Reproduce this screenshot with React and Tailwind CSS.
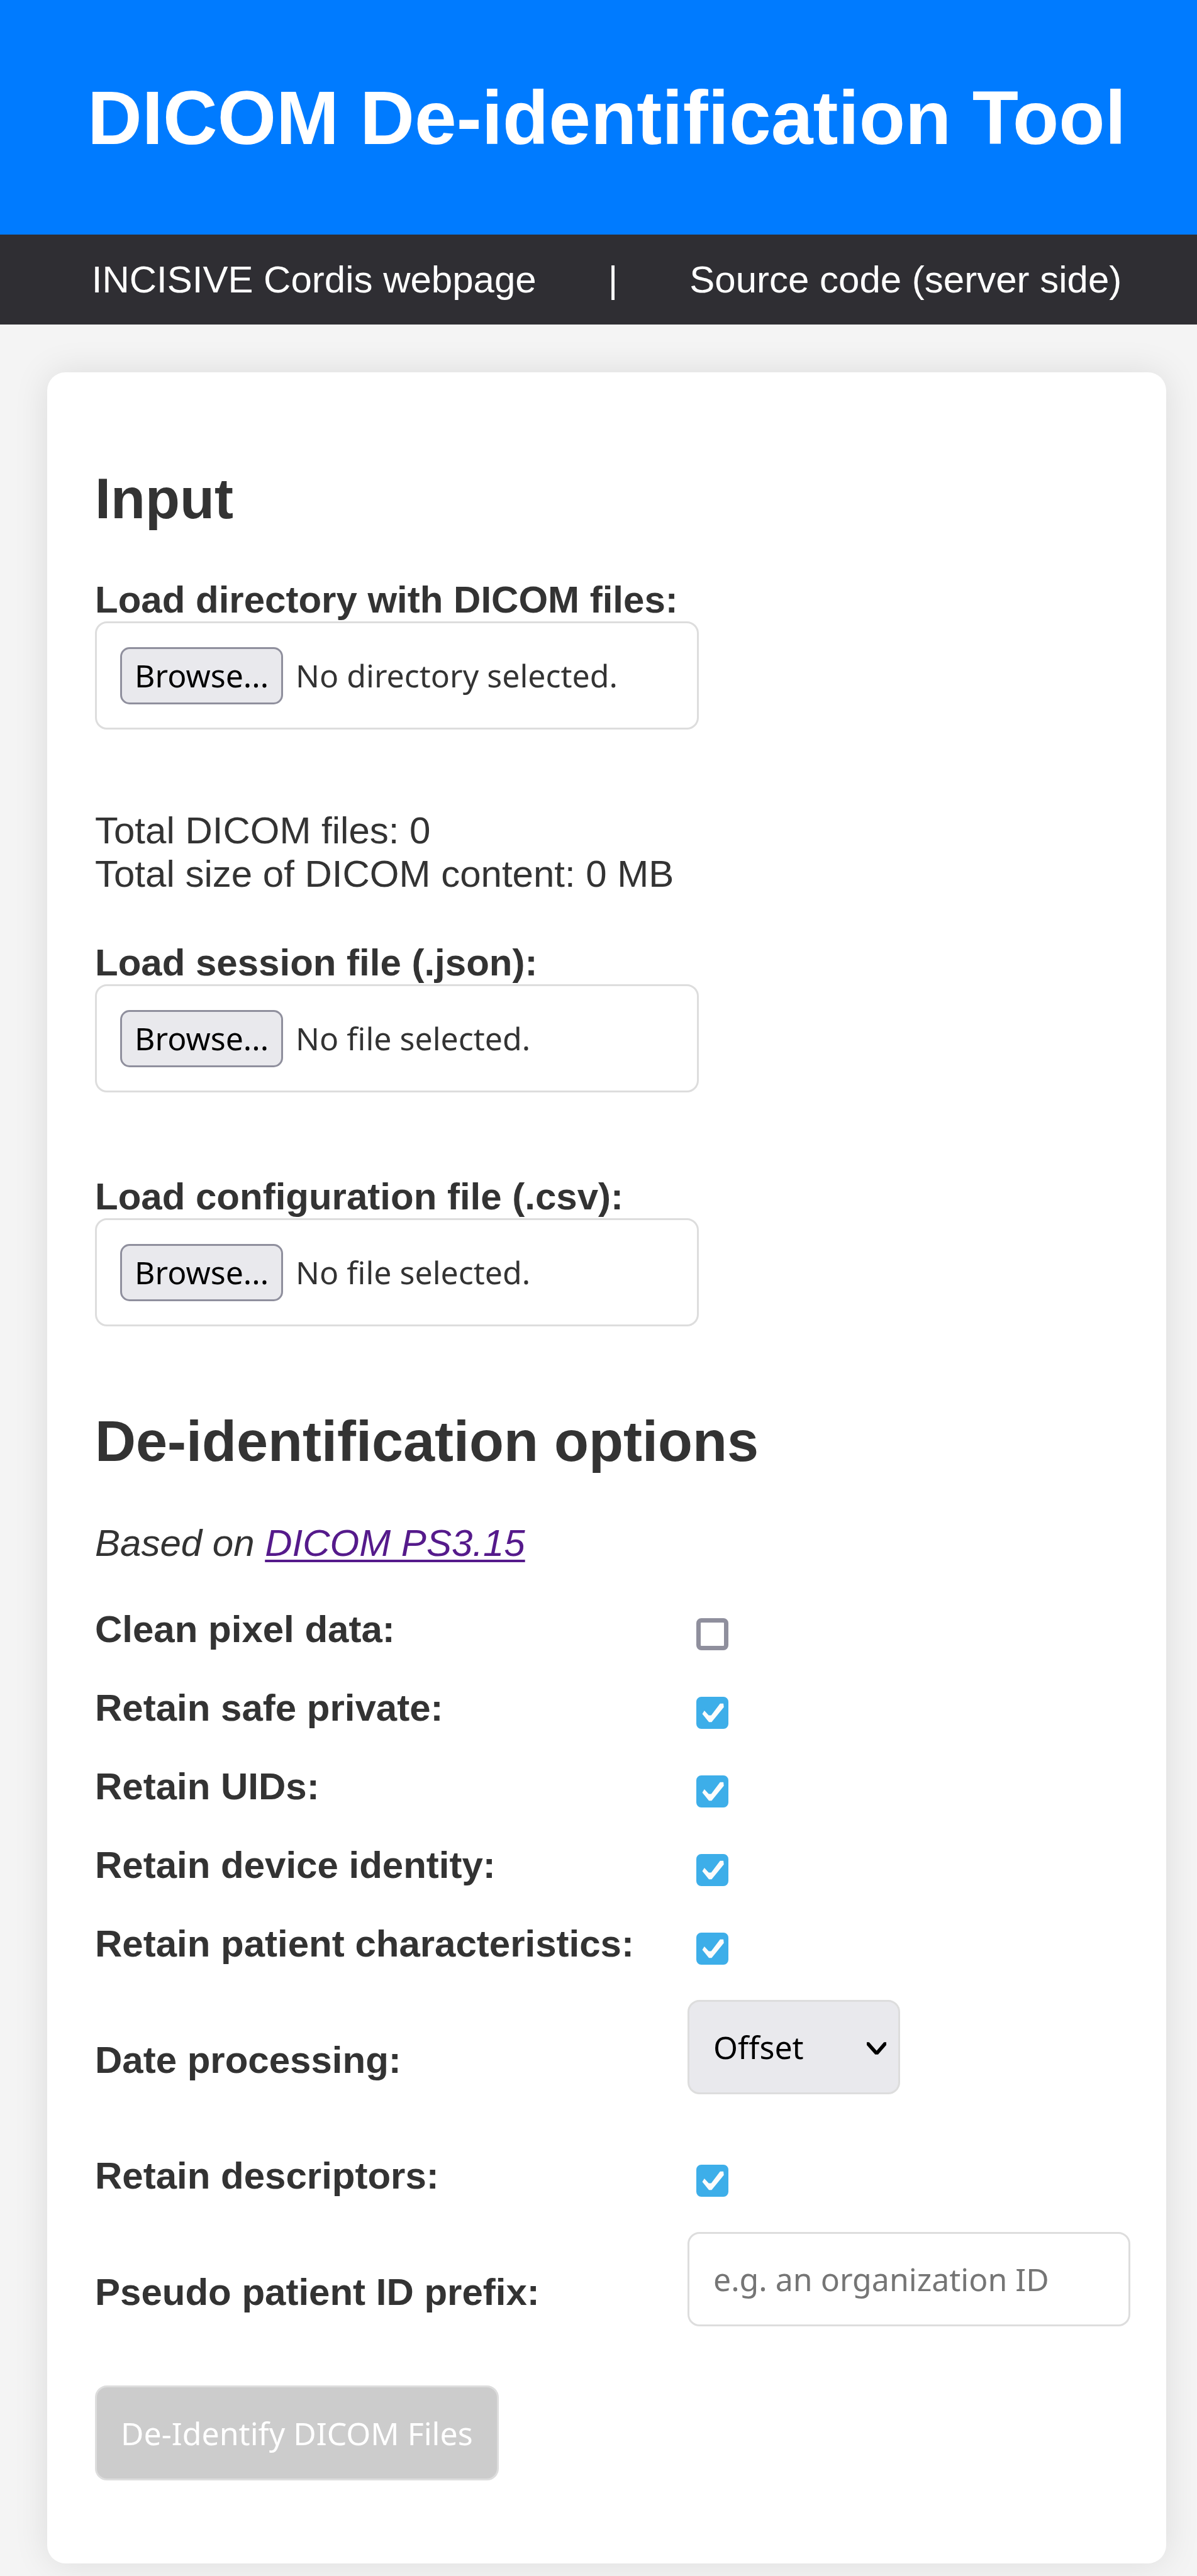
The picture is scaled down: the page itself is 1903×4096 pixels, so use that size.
import React from "react";

function FileField({ id, label, status }) {
  return (
    <div className="flex flex-col items-start">
      <label htmlFor={id} className="font-bold leading-[68px]">
        {label}
      </label>
      <label
        htmlFor={id}
        className="flex min-h-[172px] w-[960px] max-w-full items-center gap-[20px] rounded-[19px] border-[3px] border-[#ddd] px-[37px] font-['Noto_Sans',sans-serif] text-[50px] leading-[68px]"
      >
        <input id={id} type="file" className="sr-only" />
        <span className="flex h-[91px] items-center rounded-[15px] border-[3px] border-[#8f8f9d] bg-[#e9e9ed] px-[20px] text-black">
          Browse...
        </span>
        <span>{status}</span>
      </label>
    </div>
  );
}

function CheckRow({ id, label, checked }) {
  return (
    <div className="grid h-[125px] grid-cols-[942px_1fr] items-center">
      <label htmlFor={id} className="font-bold">
        {label}
      </label>
      <span className="relative ml-[14px] mt-[16px] block size-[51px]">
        <input
          id={id}
          type="checkbox"
          defaultChecked={checked}
          className="peer block size-full appearance-none rounded-[8px] border-[7px] border-[#8f8f9d] bg-white checked:border-[#3daee9] checked:bg-[#3daee9]"
        />
        <svg
          viewBox="0 0 155 155"
          aria-hidden="true"
          className="pointer-events-none absolute inset-0 hidden size-full peer-checked:block"
        >
          <path d="M29 83L39 67L60 90H72L115 33H131L133 50L74 122H61Z" fill="#fcfcfc" />
        </svg>
      </span>
    </div>
  );
}

export default function App() {
  return (
    <div className="min-h-screen bg-[#f4f4f4] pb-[20px] font-['Liberation_Sans',Arial,sans-serif] text-[60px] leading-[69px] text-[#333]">
      <header className="bg-[#007bff] pb-[117px] pl-[26px] pt-[118px] text-center text-white">
        <h1 className="whitespace-nowrap text-[120px] font-bold leading-[138px]">
          DICOM De-identification Tool
        </h1>
      </header>
      <nav className="flex justify-center gap-[114px] whitespace-nowrap bg-[#2f2e33] py-[37px] pl-[26px] text-white">
        <a href="#webpage">INCISIVE Cordis webpage</a>
        <span>|</span>
        <a href="#source">Source code (server side)</a>
      </nav>

      <main className="ml-[75px] mr-[49px] mt-[76px] rounded-[29px] bg-white pb-[132px] pl-[76px] pr-[57px] pt-[150px] shadow-[0_0_56px_rgba(0,0,0,0.1)]">
        <h2 className="mb-[75px] text-[90px] font-bold leading-[103px]">Input</h2>
        <FileField
          id="directory"
          label="Load directory with DICOM files:"
          status="No directory selected."
        />
        <div className="mb-[73px] mt-[126px]">
          <p>Total DICOM files: 0</p>
          <p>Total size of DICOM content: 0 MB</p>
        </div>
        <FileField id="session" label="Load session file (.json):" status="No file selected." />
        <div className="mt-[132px]">
          <FileField
            id="configuration"
            label="Load configuration file (.csv):"
            status="No file selected."
          />
        </div>

        <h2 className="mb-[75px] mt-[132px] text-[90px] font-bold leading-[103px]">
          De-identification options
        </h2>
        <p className="mb-[40px] italic">
          Based on{" "}
          <a
            href="#ps315"
            className="text-[#551a8b] underline decoration-[4px] underline-offset-[6px]"
          >
            DICOM PS3.15
          </a>
        </p>

        <CheckRow id="pixel" label="Clean pixel data:" />
        <CheckRow id="private" label="Retain safe private:" checked />
        <CheckRow id="uids" label="Retain UIDs:" checked />
        <CheckRow id="device" label="Retain device identity:" checked />
        <CheckRow id="patient" label="Retain patient characteristics:" checked />
        <div className="grid h-[244px] grid-cols-[942px_1fr] items-center">
          <label htmlFor="date" className="font-bold">
            Date processing:
          </label>
          <span className="relative mb-[40px] block w-[338px]">
            <select
              id="date"
              className="block h-[150px] w-full appearance-none rounded-[19px] border-[3px] border-[#ddd] bg-[#e9e9ed] px-[38px] font-['Noto_Sans',sans-serif] text-[50px] text-black"
            >
              <option>Offset</option>
              <option>Remove</option>
              <option>Retain</option>
            </select>
            <svg
              viewBox="123 226 93 59"
              aria-hidden="true"
              className="pointer-events-none absolute right-[22px] top-[67px] h-[20px] w-[31px]"
            >
              <path
                d="M123 226H134L170 267L205 226H216V240L177 285H163L123 240Z"
                fill="black"
              />
            </svg>
          </span>
        </div>
        <CheckRow id="descriptors" label="Retain descriptors:" checked />
        <div className="grid h-[244px] grid-cols-[942px_1fr] items-center">
          <label htmlFor="prefix" className="font-bold">
            Pseudo patient ID prefix:
          </label>
          <input
            id="prefix"
            type="text"
            placeholder="e.g. an organization ID"
            className="mb-[40px] block h-[150px] w-full rounded-[19px] border-[3px] border-[#ddd] bg-white px-[38px] font-['Noto_Sans',sans-serif] text-[50px] placeholder:text-[#757575]"
          />
        </div>

        <button
          type="button"
          disabled
          className="mt-[27px] block h-[151px] whitespace-nowrap rounded-[19px] border-[3px] border-[#ddd] bg-[#ccc] px-[38px] font-['Noto_Sans',sans-serif] text-[50px] leading-[68px] text-white"
        >
          De-Identify DICOM Files
        </button>
      </main>
    </div>
  );
}
